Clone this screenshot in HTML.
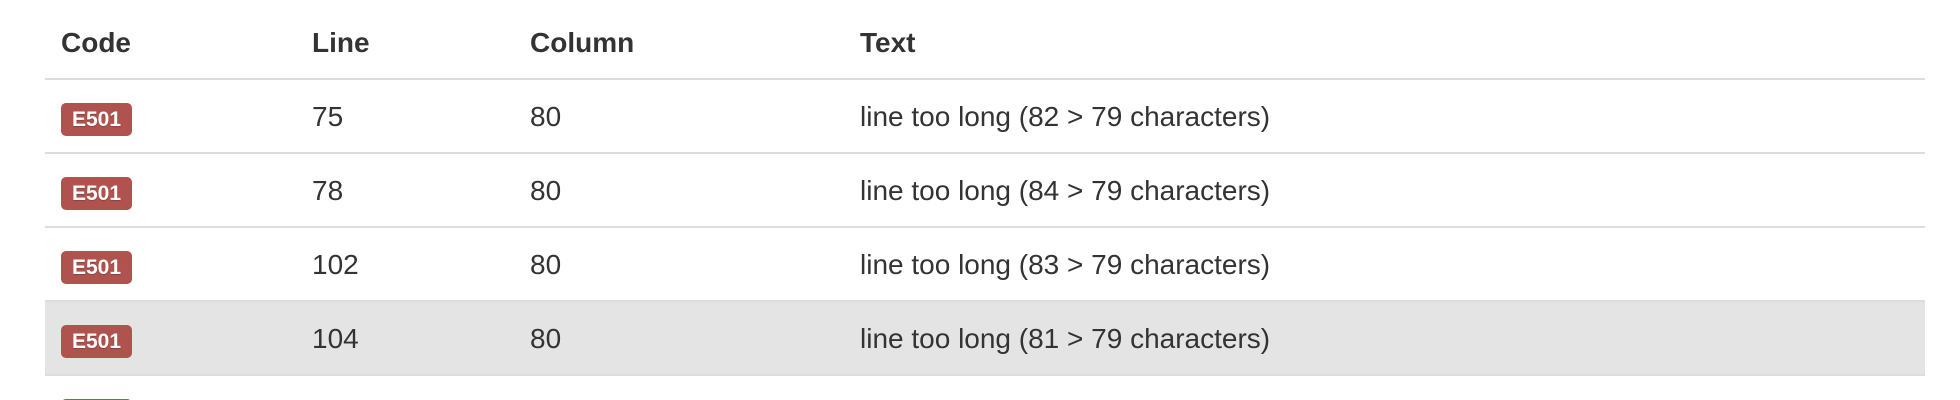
<!DOCTYPE html>
<html><head><meta charset="utf-8"><style>
html,body{margin:0;padding:0;background:#fff;width:1960px;height:400px;overflow:hidden}
body{font-family:"Liberation Sans",Arial,sans-serif;color:#333;font-size:28px;position:relative}
.t{position:absolute;left:45px;width:1880px;height:400px;overflow:hidden}
.h{position:absolute;top:0;left:0;width:100%;height:78px;border-bottom:2px solid #ddd}
.r{position:absolute;left:0;width:100%;height:72px;border-bottom:2px solid #ddd}
.c{position:absolute;line-height:40px;white-space:nowrap}
.h .c{font-weight:bold;top:23px}
.r .c{top:17px}
.c1{left:16px}.c2{left:267px}.c3{left:485px}.c4{left:815px}
.lb{display:inline-block;background:#b0524d;color:#fff;font-weight:bold;font-size:21px;line-height:24px;padding:5px 11px 4px 11px;border-radius:5px;vertical-align:middle;position:relative;top:1px;text-shadow:0 1px 1px rgba(0,0,0,.2)}
</style></head><body>
<div class="t">
<div class="h"><div class="c c1">Code</div><div class="c c2">Line</div><div class="c c3">Column</div><div class="c c4">Text</div></div>
<div class="r" style="top:80px"><div class="c c1"><span class="lb">E501</span></div><div class="c c2">75</div><div class="c c3">80</div><div class="c c4">line too long (82 &gt; 79 characters)</div></div>
<div class="r" style="top:154px"><div class="c c1"><span class="lb">E501</span></div><div class="c c2">78</div><div class="c c3">80</div><div class="c c4">line too long (84 &gt; 79 characters)</div></div>
<div class="r" style="top:228px"><div class="c c1"><span class="lb">E501</span></div><div class="c c2">102</div><div class="c c3">80</div><div class="c c4">line too long (83 &gt; 79 characters)</div></div>
<div class="r" style="top:302px;background:#e4e4e4"><div class="c c1"><span class="lb">E501</span></div><div class="c c2">104</div><div class="c c3">80</div><div class="c c4">line too long (81 &gt; 79 characters)</div></div>
<div class="r" style="top:376px;border:none;height:24px"><div class="c c1"><span class="lb">E501</span></div></div>
</div>
</body></html>
